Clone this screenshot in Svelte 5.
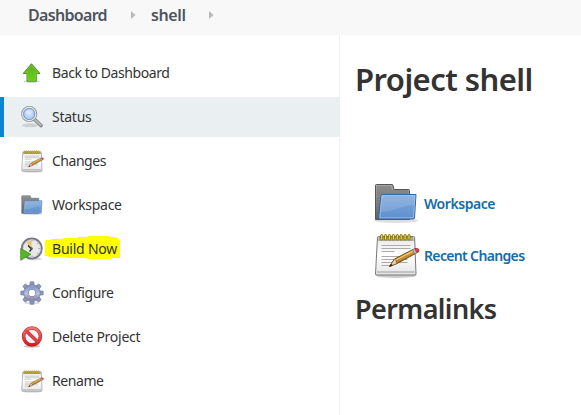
<script>
  const tasks = [
    { label: 'Back to Dashboard', icon: 'up', tracking: -0.41 },
    { label: 'Status', icon: 'search', tracking: -0.25, active: true },
    { label: 'Changes', icon: 'notepad', tracking: -0.48 },
    { label: 'Workspace', icon: 'folder', tracking: -0.28 },
    { label: 'Build Now', icon: 'clock', tracking: -0.22, marked: true },
    { label: 'Configure', icon: 'gear', tracking: -0.38 },
    { label: 'Delete Project', icon: 'stop', tracking: -0.26 },
    { label: 'Rename', icon: 'notepad', tracking: -0.42 }
  ];
  const teeth = [0, 45, 90, 135, 180, 225, 270, 315];
  const rings = [0, 1, 2, 3, 4, 5, 6, 7];
</script>

{#snippet folder(size)}
  <svg width={size} height={size} viewBox="0 0 48 48" aria-hidden="true">
    <ellipse cx="24" cy="41.500" rx="22" ry="2.5" fill="#000" opacity=".13" />
    <path d="M3.500 40.500V6.500q0-1 1-1h15.500q1 0 1 1l1 4h14.500q1 0 1 1v29z" fill="url(#folderBack)" stroke="#555" />
    <path d="M5 8h14M5 10h15M5 12h31M5 14h31M5 16h3M5 19h3M5 22h3M5 25h3M5 28h3M5 31h3M5 34h3" stroke="#6b6b6b" stroke-width=".8" />
    <path d="M9 15.500h35l-1.500 23.500q-.2 1-1.200 1H7.500q-1 0-.9-1z" fill="url(#folderFront)" stroke="#3465a4" />
    <path d="M10 16.500h32.900l-1.500 22.300H7.800z" fill="none" stroke="#b4d0ef" stroke-opacity=".6" />
    <path d="M10 17h32.500l-.7 9c-12 0-20 7-33 7z" fill="#fff" opacity=".12" />
  </svg>
{/snippet}

{#snippet notepad(size)}
  <svg width={size} height={size} viewBox="0 0 48 48" aria-hidden="true">
    <ellipse cx="24" cy="44.500" rx="20" ry="2.500" fill="#000" opacity=".2" />
    <path d="M6.500 5.500h35q1 0 1.100 1L44 43q0 1-1 1H4.500q-1 0-1-1L5.500 6.500q0-1 1-1z" fill="url(#paper)" stroke="#777" />
    <path d="M6.500 6h35l.2 4H6.300z" fill="#a9a899" />
    <path d="M5 41h37.500" stroke="#c2c2c2" stroke-width="2" />
    <path d="M9.500 14.500h29M9.500 17.500h29M9.500 20.500h13M9.500 25.500h29M9.500 28.500h26M9.500 31.500h26M9.500 34.500h8" stroke="#aaa" />
    {#each rings as n}
      <rect x={8.6 + n * 3.9} y="3.500" width="2.200" height="5.500" rx="1.100" fill="#eedc57" stroke="#887303" />
    {/each}
    <path d="M17.500 35.500l5-7.500L41 18.500l2.500 4L25 32.500z" fill="url(#pencil)" stroke="#6c4b14" />
    <path d="M23.500 29.300L41 20" stroke="#f3ca72" stroke-width="1.300" />
    <path d="M17.500 35.500l5-7.500q2 1.300 2.500 4.500z" fill="#ead0a6" stroke="#765429" stroke-width=".7" />
    <path d="M17 35.800l2-3 1.800 1.600z" fill="#222" />
    <path d="M40.500 18.700l2.300-1.200 2.400 4.300-2.300 1.200z" fill="#bbb" stroke="#777" stroke-width=".7" />
    <path d="M42.700 17.500q3-.8 4.300 1.200.6 2.200-1.800 3.200z" fill="#ed3640" stroke="#a71d27" stroke-width=".6" />
  </svg>
{/snippet}

<svg class="defs" aria-hidden="true">
  <defs>
    <linearGradient id="folderBack" x2="0" y2="1"><stop stop-color="#a5a5a5" /><stop offset="1" stop-color="#626262" /></linearGradient>
    <linearGradient id="folderFront" x2="0" y2="1"><stop stop-color="#82abd9" /><stop offset="1" stop-color="#5c8fcf" /></linearGradient>
    <linearGradient id="paper" x2="0" y2="1"><stop stop-color="#e8e8e8" /><stop offset=".5" stop-color="#fff" /><stop offset="1" stop-color="#e4e4e4" /></linearGradient>
    <linearGradient id="pencil" x2=".3" y2="1"><stop stop-color="#e3a944" /><stop offset="1" stop-color="#aa7428" /></linearGradient>
    <linearGradient id="green" x2="0" y2="1"><stop stop-color="#5faa24" /><stop offset="1" stop-color="#67d50f" /></linearGradient>
    <linearGradient id="metal" x2="0" y2="1"><stop stop-color="#8a9cc5" /><stop offset=".55" stop-color="#b8c2dc" /><stop offset="1" stop-color="#8f8fae" /></linearGradient>
    <linearGradient id="red" x2="0" y2="1"><stop stop-color="#ee7774" /><stop offset="1" stop-color="#d61b22" /></linearGradient>
    <radialGradient id="lens"><stop stop-color="#d4e7fc" /><stop offset="1" stop-color="#9bbff0" /></radialGradient>
  </defs>
</svg>

<div class="app">
  <nav class="crumbs">
    <span class="crumb dashboard">Dashboard</span>
    <svg width="5" height="8" viewBox="0 0 5 8"><path d="M0 0l4.500 4L0 8z" fill="#b8b8b8" /></svg>
    <span class="crumb shell">shell</span>
    <svg width="5" height="8" viewBox="0 0 5 8"><path d="M0 0l4.500 4L0 8z" fill="#b8b8b8" /></svg>
  </nav>
  <div class="body">
    <aside>
      {#each tasks as task}
        <div class="task" class:active={task.active}>
          <span class="icon">
            {#if task.icon === 'notepad'}
              {@render notepad(24)}
            {:else if task.icon === 'folder'}
              {@render folder(24)}
            {:else}
              <svg width="24" height="24" viewBox="0 0 24 24">
                {#if task.icon === 'up'}
                  <ellipse cx="11.500" cy="20.500" rx="8" ry="1.500" fill="#000" opacity=".18" />
                  <path d="M11.500 2.700L20 12.500h-3.700v7.700H7v-7.700H3.200z" fill="url(#green)" stroke="#43841c" stroke-width=".9" />
                  <path d="M11.500 4.200L18 11.700h-2.500v7.600H7.800v-7.600H5.300z" fill="none" stroke="#9bdb67" stroke-opacity=".6" stroke-width=".7" />
                {:else if task.icon === 'search'}
                  <ellipse cx="10" cy="20.300" rx="8" ry="2" fill="#000" opacity=".13" />
                  <path d="M14.700 14.500l6.300 6" stroke="#777" stroke-width="3.600" stroke-linecap="round" />
                  <path d="M14.800 14.500l6 5.700" stroke="#bbb" stroke-width="2" stroke-linecap="round" />
                  <circle cx="9.200" cy="9" r="7" fill="url(#lens)" stroke="#929292" stroke-width="2" />
                  <circle cx="9.200" cy="9" r="6.600" fill="none" stroke="#eee" stroke-width="1.100" />
                  <circle cx="9.200" cy="9" r="5.600" fill="none" stroke="#6887bd" stroke-width=".7" />
                  <path d="M5 9q0-4.500 5-4.500 2.500.5 3 2.500-4 3-8 2z" fill="#fff" opacity=".35" />
                {:else if task.icon === 'clock'}
                  <ellipse cx="14" cy="22" rx="8" ry="1.500" fill="#000" opacity=".15" />
                  <circle cx="11.800" cy="11.500" r="9.900" fill="#e9e9e7" stroke="#77758a" stroke-width="2" />
                  <circle cx="11.800" cy="11.500" r="8.700" fill="none" stroke="#cccbd6" stroke-width="1" />
                  <path d="M11.500 11.500L6.500 6q2.700-2.700 5-2.300z" fill="#e5c768" />
                  <path d="M11.500 12L8 8.500M12 11.500L9.500 14.500" stroke="#262626" stroke-width="1.300" />
                  <circle cx="11.500" cy="11.500" r="1.200" fill="#555" />
                  <path d="M12 3v1.500M20 11.500h-1.500M12 20v-1.500M18 6l-1 1M18 17l-1-1" stroke="#999" stroke-width=".8" />
                  <path d="M.7 11.500L11 17.300.7 23.300z" fill="#58b52a" stroke="#40901e" stroke-width=".8" />
                {:else if task.icon === 'gear'}
                  <ellipse cx="12" cy="22" rx="8" ry="1.500" fill="#000" opacity=".13" />
                  <g fill="#8b98bd" stroke="#6e789d" stroke-width=".7">
                    {#each teeth as angle}
                      <path d="M9.700 4.500L10.300.8h3.400l.6 3.700z" transform="rotate({angle} 12 12)" />
                    {/each}
                  </g>
                  <circle cx="12" cy="12" r="5.800" fill="none" stroke="#707ba2" stroke-width="5.200" />
                  <circle cx="12" cy="12" r="5.800" fill="none" stroke="url(#metal)" stroke-width="4.300" />
                {:else}
                  <ellipse cx="12" cy="21.300" rx="8" ry="1.500" fill="#000" opacity=".25" />
                  <g fill="none">
                    <circle cx="12" cy="11.500" r="8.400" fill="#f3f3f3" stroke="#b92529" stroke-width="3.500" />
                    <path d="M6 5.700l12 11.600" stroke="#b92529" stroke-width="3.300" />
                    <circle cx="12" cy="11.500" r="8.400" stroke="url(#red)" stroke-width="2.500" />
                    <path d="M6 5.700l12 11.600" stroke="#df4548" stroke-width="2.300" />
                  </g>
                {/if}
              </svg>
            {/if}
          </span>
          <span class="label">
            {#if task.marked}
              <svg class="mark" width="76" height="24" viewBox="0 0 76 24"><path d="M1 4h6V3h12V2h15V1h10V0h22v1h5v1h3v2h2v18h-9v1H43v-1H22v-1H5v-1H1z" fill="#ff0" /></svg>
            {/if}
            <span class="text" style:letter-spacing="{task.tracking}px">{task.label}</span>
          </span>
        </div>
      {/each}
    </aside>
    <main>
      <h1>Project shell</h1>
      <div class="links">
        <div class="link">{@render folder(48)}<a href="#workspace">Workspace</a></div>
        <div class="link">{@render notepad(48)}<a class="recent" href="#changes">Recent Changes</a></div>
      </div>
      <h2>Permalinks</h2>
    </main>
  </div>
</div>

<style>
  :global(body) { margin: 0; background: #fff; overflow: hidden; }
  .app { height: 415px; font-family: "Noto Sans", sans-serif; color: #333; overflow: hidden; }
  .defs { position: absolute; width: 0; height: 0; }
  .crumbs { height: 35px; box-sizing: border-box; display: flex; align-items: center; padding: 0 0 5px 28px; background: #f8f8f8; color: #4d545d; font-size: 16px; font-weight: 600; }
  .crumb { white-space: nowrap; line-height: 22px; }
  .dashboard { width: 103px; letter-spacing: -.68px; }
  .shell { width: 60px; margin-left: 15px; letter-spacing: -.4px; margin-right: -2px; }
  .body { display: flex; height: 380px; }
  aside { width: 339px; flex: none; padding-top: 18px; display: flex; flex-direction: column; gap: 4px; border-right: 1px solid #eaeff2; box-sizing: content-box; }
  .task { height: 40px; flex: none; display: flex; align-items: center; border-left: 4px solid transparent; padding-left: 16px; box-sizing: border-box; font-size: 14px; }
  .active { background: #eaeff2; border-color: #0b84d5; }
  .icon { width: 24px; height: 24px; margin-right: 8px; flex: none; }
  .icon svg, .link svg { display: block; flex: none; }
  .label { position: relative; line-height: 20px; white-space: nowrap; }
  .text { position: relative; }
  .mark { position: absolute; left: -8px; top: -3px; }
  main { padding-left: 15px; flex: 1; }
  h1, h2 { margin: 0; white-space: nowrap; font-weight: 600; }
  h1 { font-size: 31px; line-height: 40px; padding-top: 24px; letter-spacing: -.55px; }
  .links { padding: 80px 0 0 17px; display: flex; flex-direction: column; gap: 4px; }
  .link { height: 48px; display: flex; align-items: center; gap: 4px; }
  a { color: #126da8; font-size: 14px; font-weight: 600; text-decoration: none; white-space: nowrap; letter-spacing: -.45px; }
  .recent { letter-spacing: -.65px; }
  h2 { font-size: 27px; line-height: 36px; padding-top: 12px; letter-spacing: -.6px; }
</style>
